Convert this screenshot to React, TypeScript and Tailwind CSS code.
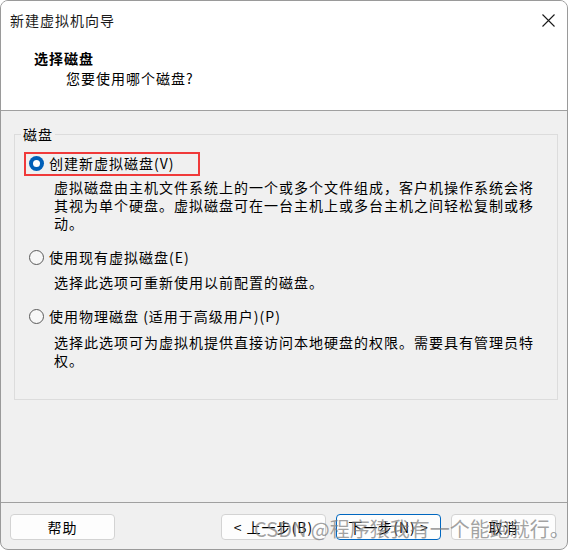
import React from "react";

const font = { fontFamily: '"Noto Sans CJK SC", "Noto Sans", sans-serif' };

function Radio({ checked }: { checked?: boolean }) {
  return checked ? (
    <span className="w-[15px] h-[15px] rounded-full bg-[#005fb8] flex items-center justify-center shrink-0">
      <span className="w-[7px] h-[7px] rounded-full bg-white" />
    </span>
  ) : (
    <span className="w-[15px] h-[15px] rounded-full border border-[#5a5a5a] bg-[#f7f7f7] shrink-0" />
  );
}

function Btn({ children, primary }: { children: React.ReactNode; primary?: boolean }) {
  return (
    <div
      className={
        "h-[26px] w-[105px] rounded-[4px] bg-[#fdfdfd] flex items-center justify-center text-[14px] tracking-[1px] text-black leading-none " +
        (primary ? "border border-[#0067c0]" : "border border-[#d3d3d3]")
      }
    >
      {children}
    </div>
  );
}

export default function App() {
  return (
    <div className="w-[570px] h-[551px] bg-white relative overflow-hidden" style={font}>
      <div className="w-[568px] h-[550px] border border-[#9a9a9a] rounded-t-[8px] rounded-b-[8px] overflow-hidden flex flex-col bg-[#f0f0f0]">
        {/* header */}
        <div className="bg-white border-b border-[#a0a0a0] h-[110px] shrink-0">
          <div className="h-[37px] flex items-center justify-between pl-[9px] pr-[12px]">
            <span className="text-[14px] tracking-[1px] text-[#1a1a1a] leading-[18px] mt-[1px]">新建虚拟机向导</span>
            <svg width="13" height="13" viewBox="0 0 13 13" className="mt-[1px]">
              <path d="M0.5 0.5 L12.5 12.5 M12.5 0.5 L0.5 12.5" stroke="#1a1a1a" strokeWidth="1.1" />
            </svg>
          </div>
          <div className="pt-[11px]">
            <div className="pl-[33px] text-[14px] font-bold tracking-[1px] leading-[18px] text-black">选择磁盘</div>
            <div className="pl-[65px] mt-[2px] text-[14px] tracking-[1px] leading-[18px] text-black">您要使用哪个磁盘?</div>
          </div>
        </div>
        {/* body */}
        <div className="h-[391px] shrink-0 pl-[13px] pt-[23px]">
          <div className="relative w-[544px] h-[266px] border border-[#dcdcdc]">
            <span className="absolute left-[6px] top-[-10px] px-[2px] bg-[#f0f0f0] text-[14px] tracking-[1px] leading-[18px] text-black">磁盘</span>
            <div className="pt-[19px] pl-[14px] text-[14px] tracking-[1px] leading-[18px] text-black">
              <div className="relative flex items-center gap-[5px] h-[18px]">
                <Radio checked />
                <span>创建新虚拟磁盘(V)</span>
                <div className="absolute left-[-5px] top-[-2px] w-[176px] h-[24px] border-2 border-[#f03a3a]" />
              </div>
              <div className="pl-[25px] mt-[6px]">
                <div>虚拟磁盘由主机文件系统上的一个或多个文件组成，客户机操作系统会将</div>
                <div>其视为单个硬盘。虚拟磁盘可在一台主机上或多台主机之间轻松复制或移</div>
                <div>动。</div>
              </div>
              <div className="flex items-center gap-[5px] h-[18px] mt-[16px]">
                <Radio />
                <span>使用现有虚拟磁盘(E)</span>
              </div>
              <div className="pl-[25px] mt-[7px]">选择此选项可重新使用以前配置的磁盘。</div>
              <div className="flex items-center gap-[5px] h-[18px] mt-[16px]">
                <Radio />
                <span>使用物理磁盘 (适用于高级用户)(P)</span>
              </div>
              <div className="pl-[25px] mt-[8px]">
                <div>选择此选项可为虚拟机提供直接访问本地硬盘的权限。需要具有管理员特</div>
                <div>权。</div>
              </div>
            </div>
          </div>
        </div>
        {/* footer */}
        <div className="border-t border-[#a0a0a0] flex-1 flex items-start pt-[11px] pl-[9px]">
          <Btn>帮助</Btn>
          <div className="ml-[106px]">
            <Btn>&lt; 上一步(B)</Btn>
          </div>
          <div className="ml-[10px]">
            <Btn primary>下一步(N) &gt;</Btn>
          </div>
          <div className="ml-[10px]">
            <Btn>取消</Btn>
          </div>
        </div>
      </div>
      <div className="absolute left-[254px] top-[515px] text-[20px] leading-[28px] text-[#7a7a7a]/70 whitespace-nowrap">
        CSDN @程序猿我有一个能跑就行。
      </div>
    </div>
  );
}
